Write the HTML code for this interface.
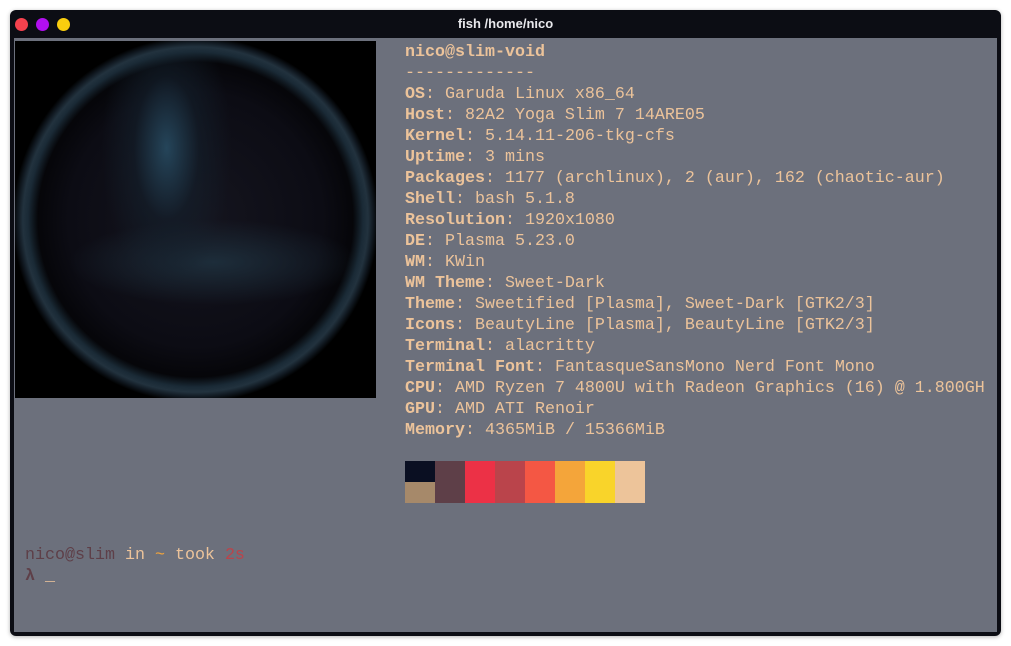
<!DOCTYPE html>
<html><head><meta charset="utf-8"><style>
body{margin:0;width:1011px;height:646px;background:#fff;overflow:hidden;position:relative;font-family:"Liberation Mono","DejaVu Sans Mono",monospace;}
.win{position:absolute;left:10px;top:10px;width:991px;height:626px;background:#0c0d14;border-radius:6px;box-shadow:0 1px 4px rgba(0,0,0,.3);}
.title{position:absolute;left:0;top:0;width:100%;height:28px;color:#e8e8ec;font:bold 13px "Liberation Sans",sans-serif;text-align:center;line-height:28px;}
.dot{position:absolute;top:8px;width:13px;height:13px;border-radius:50%;}
.content{position:absolute;left:4px;top:28px;width:983px;height:594px;background:#6c707c;}
.img{position:absolute;left:1px;top:3px;width:361px;height:357px;background:
radial-gradient(circle at 50% 50%, rgba(0,0,0,0) 0, rgba(0,0,0,0) 62%, #1a2a36 66%, #22323e 68%, #101820 70%, #000 72%),
radial-gradient(ellipse 18% 40% at 42% 30%, #25455a 0, rgba(20,32,44,.6) 50%, rgba(0,0,0,0) 100%),
radial-gradient(ellipse 40% 12% at 55% 62%, #1d2d3a 0, rgba(0,0,0,0) 100%),
radial-gradient(circle at 50% 50%, #15151f 0, #0c0c14 50%, #000 72%);}
.txt{position:absolute;left:391px;top:4px;color:#ecc39a;font-size:16.67px;line-height:21px;white-space:pre;}
b{font-weight:bold}
.pal{position:absolute;left:391px;top:423px;}
.pal div{position:absolute;width:30px;height:42px;top:0}
.prompt{position:absolute;left:11px;top:507px;font-size:16.67px;line-height:21px;color:#ecc39a;white-space:pre;}
</style></head><body>
<div class="win">
<div class="dot" style="left:5px;background:#f5424e"></div>
<div class="dot" style="left:26px;background:#b10ff0"></div>
<div class="dot" style="left:47px;background:#f9cd0e"></div>
<div class="title">fish /home/nico</div>
<div class="content">
<div class="img"></div>
<div class="txt"><b>nico@slim-void</b>
-------------
<b>OS</b>: Garuda Linux x86_64
<b>Host</b>: 82A2 Yoga Slim 7 14ARE05
<b>Kernel</b>: 5.14.11-206-tkg-cfs
<b>Uptime</b>: 3 mins
<b>Packages</b>: 1177 (archlinux), 2 (aur), 162 (chaotic-aur)
<b>Shell</b>: bash 5.1.8
<b>Resolution</b>: 1920x1080
<b>DE</b>: Plasma 5.23.0
<b>WM</b>: KWin
<b>WM Theme</b>: Sweet-Dark
<b>Theme</b>: Sweetified [Plasma], Sweet-Dark [GTK2/3]
<b>Icons</b>: BeautyLine [Plasma], BeautyLine [GTK2/3]
<b>Terminal</b>: alacritty
<b>Terminal Font</b>: FantasqueSansMono Nerd Font Mono
<b>CPU</b>: AMD Ryzen 7 4800U with Radeon Graphics (16) @ 1.800GH
<b>GPU</b>: AMD ATI Renoir
<b>Memory</b>: 4365MiB / 15366MiB</div>
<div class="pal">
<div style="left:0;height:21px;background:#0a0f22"></div>
<div style="left:0;top:21px;height:21px;background:#a6896a"></div>
<div style="left:30px;background:#5e3f48"></div>
<div style="left:60px;background:#ec3146"></div>
<div style="left:90px;background:#ba444b"></div>
<div style="left:120px;background:#f45744"></div>
<div style="left:150px;background:#f4a53a"></div>
<div style="left:180px;background:#f9d42a"></div>
<div style="left:210px;background:#edc49a"></div>
</div>
<div class="prompt"><span style="color:#5e3f48">nico@slim</span> in <span style="color:#f4a53a">~</span> took <span style="color:#ba444b">2s</span>
<span style="color:#5e3f48;font-weight:bold">λ</span> _</div>
</div>
</div>
</body></html>
